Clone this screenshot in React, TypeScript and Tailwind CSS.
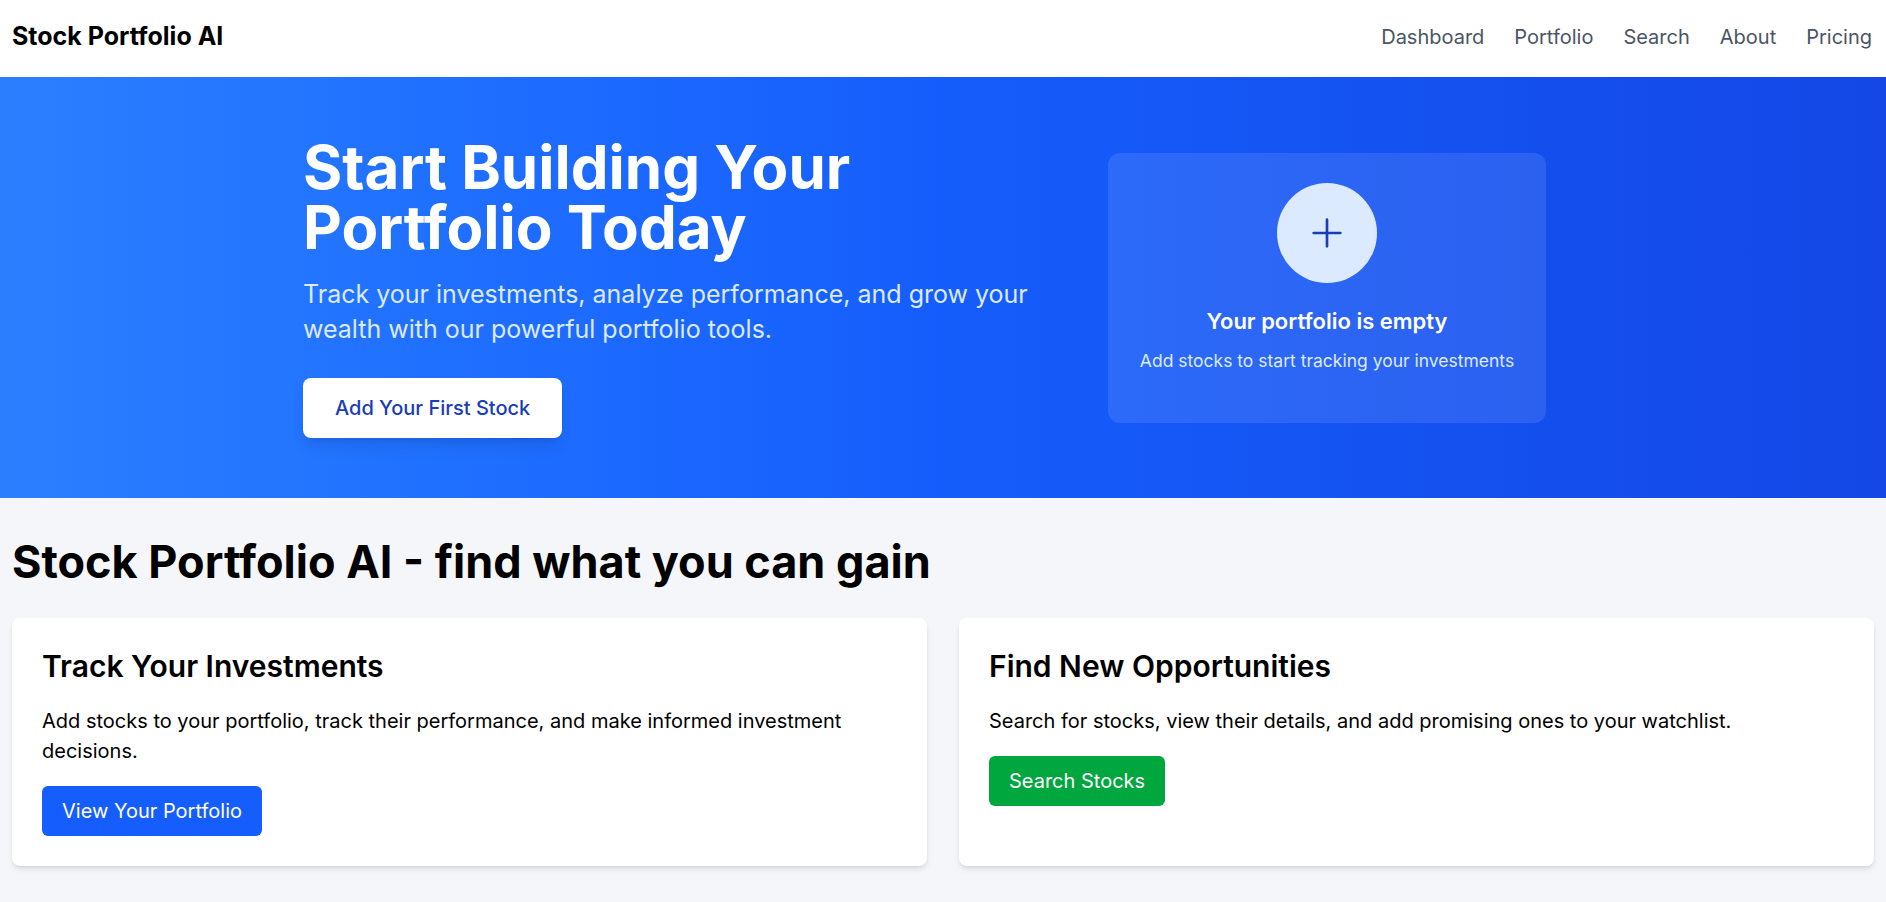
import React, { FC } from "react";

const links = ["Dashboard", "Portfolio", "Search", "About", "Pricing"];

const Navbar: FC = () => {
  return (
    <nav className="h-[77px] bg-white flex items-center justify-between px-3 pb-[3px]">
      <span className="text-[25px] font-bold text-black">Stock Portfolio AI</span>
      <ul className="flex items-center gap-[30px] pr-0.5">
        {links.map((link) => (
          <li key={link}>
            <a href="#" className="text-xl text-gray-600">
              {link}
            </a>
          </li>
        ))}
      </ul>
    </nav>
  );
};

const PlusIcon: FC = () => (
  <svg
    viewBox="0 0 24 24"
    className="w-10 h-10 text-blue-800"
    fill="none"
    stroke="currentColor"
    strokeWidth={1.6}
    strokeLinecap="round"
  >
    <path d="M12 4v16M4 12h16" />
  </svg>
);

const Hero: FC = () => {
  return (
    <section className="bg-linear-to-r from-blue-500 via-blue-600 to-blue-700 py-[60px]">
      <div className="max-w-7xl mx-auto flex items-center">
        <div className="w-3/5">
          <h1 className="text-6xl leading-none font-bold text-white mb-5">
            Start Building Your Portfolio Today
          </h1>
          <p className="text-[25px] leading-[35px] text-blue-100 mb-[31px]">
            Track your investments, analyze performance, and grow your wealth with our powerful
            portfolio tools.
          </p>
          <button className="bg-white text-blue-800 text-xl font-medium px-8 py-4 rounded-lg shadow-lg">
            Add Your First Stock
          </button>
        </div>
        <div className="w-2/5 flex justify-center">
          <div className="bg-white/10 rounded-xl px-8 pt-[30px] pb-[50px] flex flex-col items-center text-center">
            <div className="w-[100px] h-[100px] rounded-full bg-blue-100 flex items-center justify-center mb-6">
              <PlusIcon />
            </div>
            <h3 className="text-[22px] leading-[28px] font-semibold text-white mb-[14px]">
              Your portfolio is empty
            </h3>
            <p className="text-[17.5px] leading-6 text-blue-100">
              Add stocks to start tracking your investments
            </p>
          </div>
        </div>
      </div>
    </section>
  );
};

const FeatureCard: FC<{
  title: string;
  text: string;
  action: string;
  color: string;
}> = ({ title, text, action, color }) => {
  return (
    <div className="bg-white rounded-lg shadow-md p-[30px]">
      <h2 className="text-3xl font-semibold text-black mb-[22px]">{title}</h2>
      <p className="text-xl leading-[30px] text-black mb-5">{text}</p>
      <button className={`${color} text-white text-xl px-5 py-[11px] rounded-md`}>{action}</button>
    </div>
  );
};

export default function App() {
  return (
    <div className="min-h-screen bg-[#f5f6f9] font-['Inter',sans-serif]">
      <Navbar />
      <Hero />
      <main className="px-3 pt-[37px] pb-10">
        <h1 className="text-[45px] leading-[1.2] font-bold text-black mb-[29px]">
          Stock Portfolio AI - find what you can gain
        </h1>
        <div className="grid grid-cols-2 gap-8">
          <FeatureCard
            title="Track Your Investments"
            text="Add stocks to your portfolio, track their performance, and make informed investment decisions."
            action="View Your Portfolio"
            color="bg-blue-600"
          />
          <FeatureCard
            title="Find New Opportunities"
            text="Search for stocks, view their details, and add promising ones to your watchlist."
            action="Search Stocks"
            color="bg-green-600"
          />
        </div>
      </main>
    </div>
  );
}
